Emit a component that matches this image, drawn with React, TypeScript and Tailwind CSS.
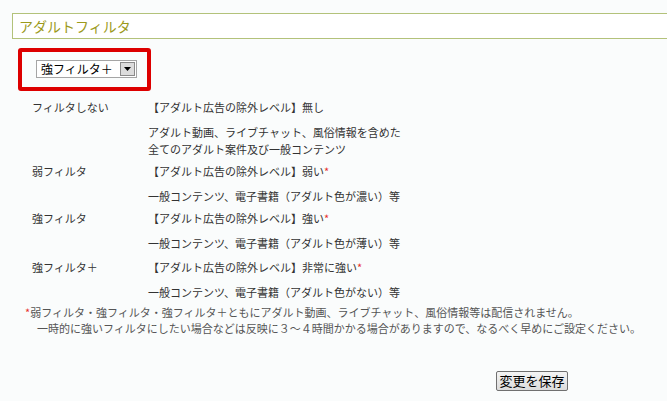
const jp = { fontFamily: '"Noto Sans CJK JP", "Noto Sans", sans-serif' };

type Level = {
  label: string;
  level: string;
  mark: boolean;
  lines: string[];
};

const levels: Level[] = [
  {
    label: 'フィルタしない',
    level: '無し',
    mark: false,
    lines: ['アダルト動画、ライブチャット、風俗情報を含めた', '全てのアダルト案件及び一般コンテンツ'],
  },
  { label: '弱フィルタ', level: '弱い', mark: true, lines: ['一般コンテンツ、電子書籍（アダルト色が濃い）等'] },
  { label: '強フィルタ', level: '強い', mark: true, lines: ['一般コンテンツ、電子書籍（アダルト色が薄い）等'] },
  { label: '強フィルタ＋', level: '非常に強い', mark: true, lines: ['一般コンテンツ、電子書籍（アダルト色がない）等'] },
];

function FilterSelect() {
  return (
    <div className="flex h-[18px] w-[101px] items-center border border-[#a5a5a5] bg-white">
      <span className="flex-1 pl-[4px] text-[12px] leading-[16px] text-black">強フィルタ＋</span>
      <div className="mr-[1px] flex h-[14px] w-[15px] items-center justify-center border border-[#8a8a8a] bg-[#dcdcdc]">
        <svg width="7" height="4" viewBox="0 0 7 4">
          <path d="M0 0h7L3.5 4z" fill="#000" />
        </svg>
      </div>
    </div>
  );
}

export default function App() {
  return (
    <div className="h-[401px] w-full overflow-hidden bg-[#fafcfc] pt-[13px] text-[#333]" style={jp}>
      <div className="ml-[12px] h-[26px] border-y border-l border-[#b3c27a] bg-white pl-[6px] text-[14px] leading-[24px] text-[#9c9a1c]">
        アダルトフィルタ
      </div>

      <div className="ml-[18px] mt-[9px] h-[43px] w-[133px] rounded-[3px] border-4 border-[#dd0000] pl-[14px] pt-[8px]">
        <FilterSelect />
      </div>

      <div className="mt-[8px] text-[11px] leading-[17px]">
        {levels.map((lv, i) => (
          <div key={lv.label} className={i === 0 ? '' : i === 3 ? 'mt-[7px]' : 'mt-[5px]'}>
            <div className="flex">
              <div className="w-[148px] pl-[32px]">{lv.label}</div>
              <div>
                【アダルト広告の除外レベル】{lv.level}
                {lv.mark && <span className="text-[#e8302c]">*</span>}
              </div>
            </div>
            <div className="mt-[8px] pl-[148px]">
              {lv.lines.map((l) => (
                <div key={l}>{l}</div>
              ))}
            </div>
          </div>
        ))}
      </div>

      <div className="mt-[3px] text-[11px] leading-[16px] text-[#555]">
        <div className="pl-[25px]">
          <span className="text-[#e8302c]">*</span>弱フィルタ・強フィルタ・強フィルタ＋ともにアダルト動画、ライブチャット、風俗情報等は配信されません。
        </div>
        <div className="pl-[37px]">
          一時的に強いフィルタにしたい場合などは反映に３～４時間かかる場合がありますので、なるべく早めにご設定ください。
        </div>
      </div>

      <div className="ml-[496px] mt-[31px]">
        <button className="h-[20px] w-[72px] rounded-[2px] border border-[#707070] bg-gradient-to-b from-[#f4f4f4] to-[#dcdcdc] text-[13px] leading-[16px] text-black">
          変更を保存
        </button>
      </div>
    </div>
  );
}
